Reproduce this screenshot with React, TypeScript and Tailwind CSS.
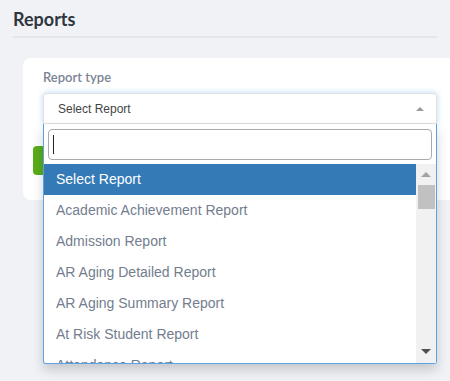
const reports = [
  "Select Report",
  "Academic Achievement Report",
  "Admission Report",
  "AR Aging Detailed Report",
  "AR Aging Summary Report",
  "At Risk Student Report",
  "Attendance Report",
];

export default function App() {
  return (
    <main className="h-[381px] w-[450px] overflow-hidden bg-[#f1f2f6] font-['Lato',sans-serif]">
      <div className="px-[13px] pt-[7px]">
        <h1 className="border-b-2 border-[#e3e5ea] pb-[5px] text-[18px] font-bold leading-[24px] text-[#2f3640]">
          Reports
        </h1>
      </div>

      <div className="relative ml-[23px] mt-[20px] h-[142px] w-[460px] rounded-lg bg-white px-[20px] pt-[11px]">
        <label className="block text-[13px] font-semibold leading-[16px] text-[#7b8494]">Report type</label>

        <div className="relative mt-[8px] w-[394px]">
          <div className="flex h-[31px] items-center justify-between rounded-t-[3px] border border-[#dcdfe4] bg-white pl-[14px] pr-[12px] font-['Liberation_Sans',sans-serif] text-[12px] text-[#444] shadow-[0_0_6px_rgba(102,175,233,0.45)]">
            <span>Select Report</span>
            <span className="h-0 w-0 border-x-[4px] border-b-[4px] border-x-transparent border-b-[#999]" />
          </div>

          <div className="absolute left-0 top-[31px] z-10 flex h-[240px] w-[394px] flex-col rounded-b-[3px] border border-t-0 border-[#5aa2e8] bg-white shadow-[0_6px_12px_rgba(0,0,0,0.18)]">
            <div className="px-[4px] pb-[4px] pt-[5px]">
              <div className="flex h-[31px] items-center rounded-[4px] border border-[#aaa] px-[4px]">
                <span className="h-[19px] w-px bg-[#222]" />
              </div>
            </div>
            <div className="flex min-h-0 flex-1 font-['Liberation_Sans',sans-serif] text-[14px]">
              <ul className="flex-1 overflow-hidden">
                {reports.map((r, i) => (
                  <li
                    key={r}
                    className={
                      i === 0
                        ? "flex h-[31px] items-center bg-[#337ab7] pl-[12px] text-white"
                        : "flex h-[31px] items-center pl-[12px] text-[#737d8e]"
                    }
                  >
                    {r}
                  </li>
                ))}
              </ul>
              <div className="flex w-[20px] flex-col items-center bg-[#f1f1f1]">
                <span className="mt-[8px] h-0 w-0 border-x-[5px] border-b-[5px] border-x-transparent border-b-[#a3a3a3]" />
                <span className="mt-[8px] h-[24px] w-[17px] bg-[#c1c1c1]" />
                <span className="mb-[9px] mt-auto h-0 w-0 border-x-[5px] border-t-[5px] border-x-transparent border-t-[#505050]" />
              </div>
            </div>
          </div>
        </div>

        <button className="ml-[-10px] mt-[22px] h-[29px] w-[60px] rounded-[4px] bg-[#5aad1a]" />
      </div>
    </main>
  );
}
